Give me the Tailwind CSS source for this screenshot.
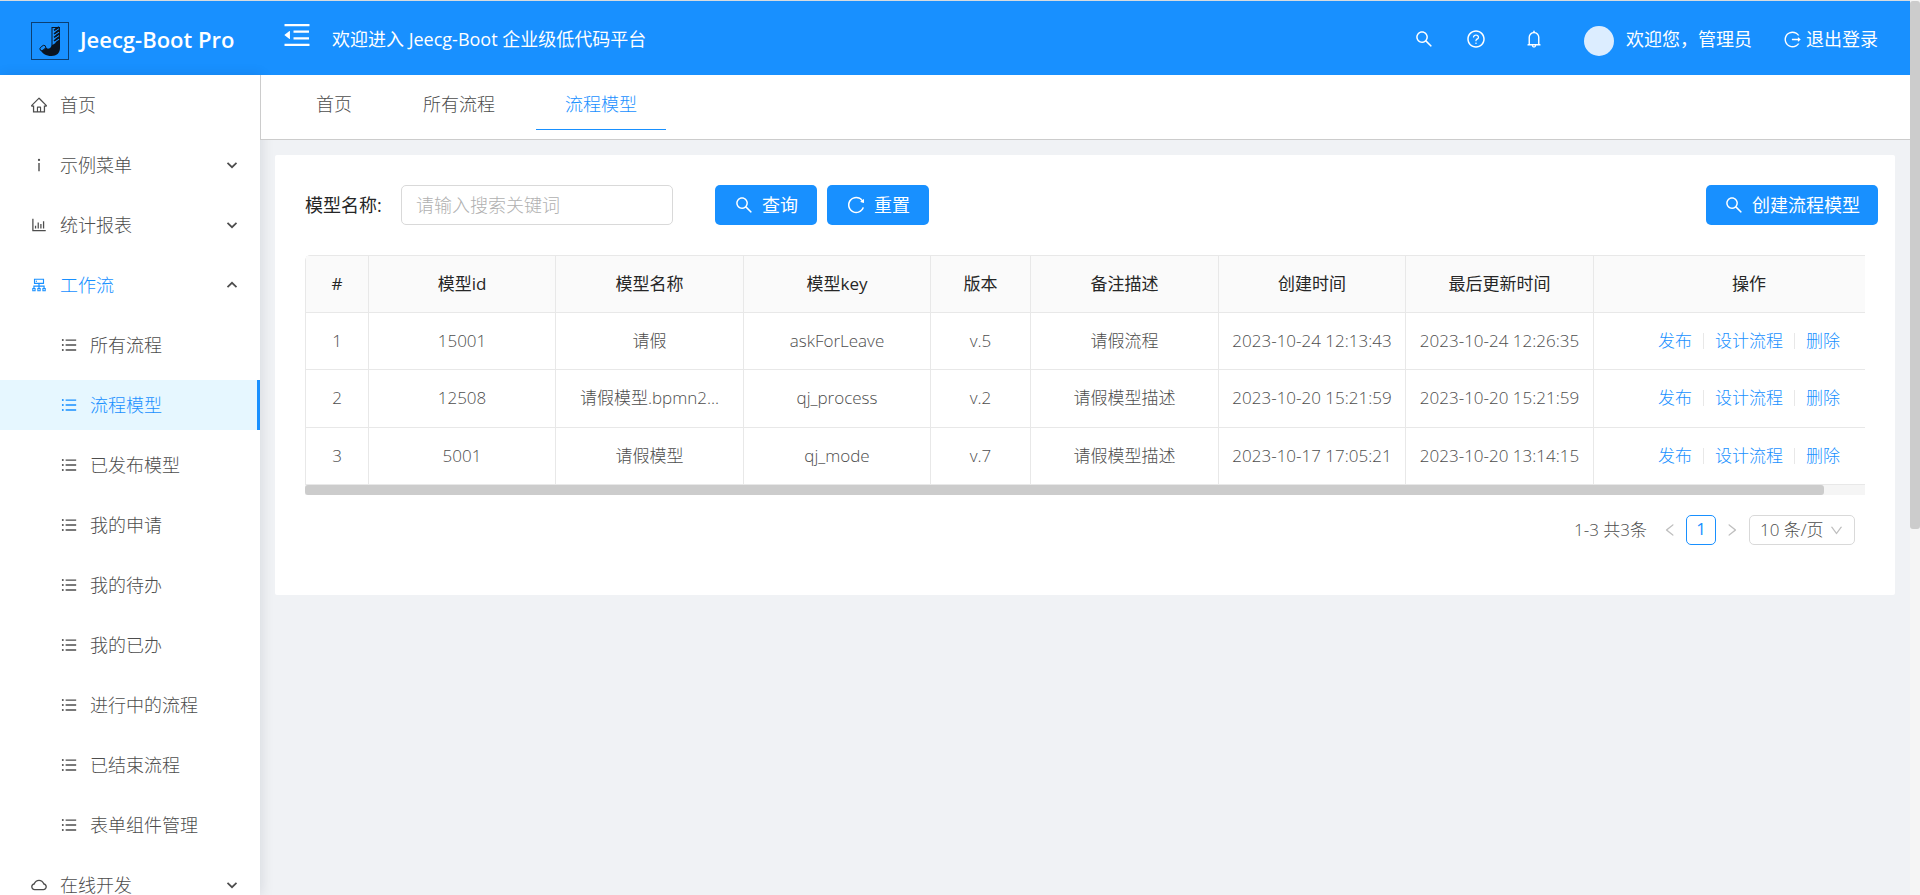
<!DOCTYPE html>
<html lang="zh-CN">
<head>
<meta charset="utf-8">
<title>流程模型 - Jeecg-Boot Pro</title>
<script src="https://cdn.jsdelivr.net/npm/@tailwindcss/browser@4"></script>
</head>
<body class="min-h-screen bg-[#f0f2f5] font-['Open_Sans','Noto_Sans_CJK_SC',sans-serif] text-[17px] leading-[26px] font-light text-[#4d4d4d]">

<svg class="hidden" aria-hidden="true">
  <symbol id="i-search" viewBox="0 0 1024 1024"><path d="M909.6 854.5L649.9 594.8C690.2 542.7 712 479 712 412c0-80.2-31.3-155.4-87.9-212.1-56.6-56.7-132-87.9-212.1-87.9s-155.5 31.3-212.1 87.9C143.2 256.5 112 331.8 112 412c0 80.1 31.3 155.5 87.9 212.1C256.5 680.8 331.8 712 412 712c67 0 130.6-21.8 182.7-62l259.7 259.6a8.2 8.2 0 0 0 11.6 0l43.6-43.5a8.2 8.2 0 0 0 0-11.6zM570.4 570.4C528 612.7 471.8 636 412 636s-116-23.3-158.4-65.6C211.3 528 188 471.8 188 412s23.3-116.1 65.6-158.4C296 211.3 352.2 188 412 188s116.1 23.2 158.4 65.6S636 352.2 636 412s-23.3 116.1-65.6 158.4z"/></symbol>
  <symbol id="i-help" viewBox="0 0 1024 1024"><path d="M512 64C264.6 64 64 264.6 64 512s200.6 448 448 448 448-200.6 448-448S759.4 64 512 64zm0 820c-205.4 0-372-166.6-372-372s166.6-372 372-372 372 166.6 372 372-166.6 372-372 372z"/><path d="M623.6 316.7C593.6 290.4 554 276 512 276s-81.6 14.5-111.6 40.7C369.2 344 352 380.7 352 420v7.6c0 4.4 3.6 8 8 8h48c4.4 0 8-3.6 8-8V420c0-44.1 43.1-80 96-80s96 35.9 96 80c0 31.1-22 59.6-56.1 72.7-21.2 8.1-39.2 22.3-52.1 40.9-13.1 19-19.9 41.8-19.9 64.9V620c0 4.4 3.6 8 8 8h48c4.4 0 8-3.6 8-8v-22.7a48.3 48.3 0 0 1 30.9-44.8c59-22.7 97.1-74.7 97.1-132.5.1-39.3-17.1-76-48.3-103.3zM472 732a40 40 0 1 0 80 0 40 40 0 1 0-80 0z"/></symbol>
  <symbol id="i-bell" viewBox="0 0 1024 1024"><path d="M816 768h-24V428c0-141.1-104.3-257.8-240-277.2V112c0-22.1-17.9-40-40-40s-40 17.9-40 40v38.8C336.3 170.2 232 286.9 232 428v340h-24c-17.7 0-32 14.3-32 32v32c0 4.4 3.6 8 8 8h216c0 61.8 50.2 112 112 112s112-50.2 112-112h216c4.4 0 8-3.6 8-8v-32c0-17.7-14.3-32-32-32zM512 888c-26.5 0-48-21.5-48-48h96c0 26.5-21.5 48-48 48zM304 768V428c0-55.6 21.6-107.8 60.9-147.1S456.4 220 512 220c55.6 0 107.8 21.6 147.1 60.9S720 372.4 720 428v340H304z"/></symbol>
  <symbol id="i-logout" viewBox="0 0 1024 1024"><path d="M868 732h-70.3c-4.8 0-9.3 2.1-12.3 5.8-7 8.5-14.5 16.7-22.4 24.5a353.84 353.84 0 0 1-112.7 75.9A352.8 352.8 0 0 1 512.4 866c-47.9 0-94.3-9.4-137.9-27.8a353.84 353.84 0 0 1-112.7-75.9 353.28 353.28 0 0 1-76-112.5C167.3 606.2 158 559.9 158 512s9.4-94.2 27.8-137.8c17.8-42.1 43.4-80 76-112.5s70.5-58.1 112.7-75.9c43.6-18.4 90-27.8 137.9-27.8 47.9 0 94.3 9.3 137.9 27.8 42.2 17.8 80.1 43.4 112.7 75.9 7.9 7.9 15.3 16.1 22.4 24.5 3 3.7 7.6 5.8 12.3 5.8H868c6.3 0 10.2-7 6.7-12.3C798 160.5 663.8 81.6 511.3 82 271.7 82.6 79.6 277.1 82 516.4 84.4 751.9 276.2 942 512.4 942c152.1 0 285.7-78.8 362.3-197.7 3.4-5.3-.4-12.3-6.7-12.3zm88.9-226.3L815 393.7c-5.3-4.2-13-.4-13 6.3v76H488c-4.4 0-8 3.6-8 8v56c0 4.4 3.6 8 8 8h314v76c0 6.7 7.8 10.5 13 6.3l141.9-112a8 8 0 0 0 0-12.6z"/></symbol>
  <symbol id="i-reload" viewBox="0 0 1024 1024"><path d="M909.1 209.3l-56.4 44.1C775.8 155.1 656.2 92 521.9 92 290 92 102.3 279.5 102 511.5 101.7 743.7 289.8 932 521.9 932c181.3 0 335.8-115 394.6-276.1 1.5-4.2-.7-8.9-4.9-10.3l-56.7-19.5a8 8 0 0 0-10.1 4.8c-1.8 5-3.8 10-5.9 14.9-17.3 41-42.1 77.8-73.7 109.4A344.77 344.77 0 0 1 655.9 829c-42.3 17.9-87.4 27-133.8 27-46.5 0-91.5-9.1-133.8-27A341.5 341.5 0 0 1 279 755.2a342.16 342.16 0 0 1-73.7-109.4c-17.9-42.4-27-87.4-27-133.9s9.1-91.5 27-133.9c17.3-41 42.1-77.8 73.7-109.4 31.6-31.6 68.4-56.4 109.3-73.8 42.3-17.9 87.4-27 133.8-27 46.5 0 91.5 9.1 133.8 27a341.5 341.5 0 0 1 109.3 73.8c9.9 9.9 19.2 20.4 27.8 31.4l-60.2 47a8 8 0 0 0 3 14.1l175.6 43c5 1.2 9.9-2.6 9.9-7.7l.8-180.9c-.1-6.6-7.8-10.3-13-6.2z"/></symbol>
  <symbol id="i-fold" viewBox="0 0 1024 1024"><path d="M408 442h480c4.4 0 8-3.6 8-8v-56c0-4.4-3.6-8-8-8H408c-4.4 0-8 3.6-8 8v56c0 4.4 3.6 8 8 8zm-8 204c0 4.4 3.6 8 8 8h480c4.4 0 8-3.6 8-8v-56c0-4.4-3.6-8-8-8H408c-4.4 0-8 3.6-8 8v56zm504-486H120c-4.4 0-8 3.6-8 8v56c0 4.4 3.6 8 8 8h784c4.4 0 8-3.6 8-8v-56c0-4.4-3.6-8-8-8zm0 632H120c-4.4 0-8 3.6-8 8v56c0 4.4 3.6 8 8 8h784c4.4 0 8-3.6 8-8v-56c0-4.4-3.6-8-8-8zM115.4 518.9L271.7 642c5.8 4.6 14.4.5 14.4-6.9V388.9c0-7.4-8.5-11.5-14.4-6.9L115.4 505.1a8.74 8.74 0 0 0 0 13.8z"/></symbol>
  <symbol id="i-home" viewBox="0 0 1024 1024"><path d="M946.5 505L560.1 118.8l-25.9-25.9a31.5 31.5 0 0 0-44.4 0L77.5 505a63.9 63.9 0 0 0-18.8 46c.4 35.2 29.7 63.3 64.9 63.3h42.5V940h691.8V614.3h43.4c17.1 0 33.2-6.7 45.3-18.8a63.6 63.6 0 0 0 18.7-45.3c0-17-6.7-33.1-18.8-45.2zM568 868H456V664h112v204zm217.9-325.7V868H632V640c0-22.1-17.9-40-40-40H432c-22.1 0-40 17.9-40 40v228H238.1V542.3h-96l370-369.7 23.1 23.1L882 542.3h-96.1z"/></symbol>
  <symbol id="i-info" viewBox="0 0 1024 1024"><path d="M448 224a64 64 0 1 0 128 0 64 64 0 1 0-128 0zm96 168h-64c-4.4 0-8 3.6-8 8v464c0 4.4 3.6 8 8 8h64c4.4 0 8-3.6 8-8V400c0-4.4-3.6-8-8-8z"/></symbol>
  <symbol id="i-chart" viewBox="0 0 1024 1024"><path d="M888 792H200V168c0-4.400-3.600-8-8-8h-56c-4.400 0-8 3.600-8 8v688c0 4.400 3.600 8 8 8h752c4.400 0 8-3.600 8-8v-56c0-4.400-3.600-8-8-8zM280 552h72v160h-72zM432 376h72v336h-72zM584 454h72v258h-72zM736 296h72v416h-72z"/></symbol>
  <symbol id="i-cluster" viewBox="0 0 1024 1024"><path fill-rule="evenodd" d="M888 680h-54V540H546v-92h238c8.800 0 16-7.200 16-16V168c0-8.800-7.200-16-16-16H240c-8.800 0-16 7.200-16 16v264c0 8.800 7.200 16 16 16h238v92H190v140h-54c-4.400 0-8 3.600-8 8v176c0 4.400 3.600 8 8 8h176c4.400 0 8-3.600 8-8V688c0-4.400-3.600-8-8-8h-54v-72h220v72h-54c-4.400 0-8 3.600-8 8v176c0 4.400 3.600 8 8 8h176c4.400 0 8-3.600 8-8V688c0-4.400-3.600-8-8-8h-54v-72h220v72h-54c-4.400 0-8 3.600-8 8v176c0 4.400 3.600 8 8 8h176c4.400 0 8-3.600 8-8V688c0-4.400-3.600-8-8-8zM192 744h64v64h-64zM480 744h64v64h-64zM768 744h64v64h-64zM288 216h448v168H288z"/><circle cx="360" cy="300" r="40"/></symbol>
  <symbol id="i-bars" viewBox="0 0 1024 1024"><path d="M320 192h600v72H320zM320 476h600v72H320zM320 760h600v72H320zM104 228a56 56 0 1 0 112 0 56 56 0 1 0-112 0zm0 284a56 56 0 1 0 112 0 56 56 0 1 0-112 0zm0 284a56 56 0 1 0 112 0 56 56 0 1 0-112 0z"/></symbol>
  <symbol id="i-cloud" viewBox="0 0 1024 1024"><path d="M811.4 418.7C765.6 297.9 648.9 212 512.200 212S258.800 297.800 213 418.600C127.300 441.100 64 519.100 64 612c0 110.500 89.500 200 199.900 200h496.200C870.500 812 960 722.500 960 612c0-92.700-63.100-170.700-148.600-193.300zm36.300 281a123.070 123.070 0 0 1-87.600 36.300H263.900c-33.100 0-64.200-12.900-87.600-36.300A123.300 123.300 0 0 1 140 612c0-28 9.100-54.300 26.200-76.300a125.700 125.700 0 0 1 66.100-43.700l37.900-9.900 13.900-36.600c8.600-22.800 20.600-44.100 35.700-63.400a245.600 245.600 0 0 1 52.400-49.900c41.100-28.900 89.500-44.200 140-44.200s98.900 15.300 140 44.200c19.900 14 37.500 30.800 52.400 49.900 15.100 19.300 27.100 40.700 35.700 63.400l13.800 36.500 37.800 10c54.300 14.500 92.100 63.800 92.100 120 0 33.100-12.900 64.300-36.300 87.700z"/></symbol>
  <symbol id="i-down" viewBox="0 0 1024 1024"><path d="M884 256h-75c-5.100 0-9.900 2.500-12.900 6.600L512 654.200 227.900 262.600c-3-4.100-7.800-6.600-12.900-6.600h-75c-6.500 0-10.300 7.400-6.500 12.700l352.600 486.100c12.800 17.600 39 17.600 51.700 0l352.600-486.100c3.900-5.300.1-12.700-6.400-12.700z"/></symbol>
  <symbol id="i-left" viewBox="0 0 1024 1024"><path d="M724 218.300V141c0-6.700-7.700-10.400-12.900-6.300L260.300 486.800a31.860 31.860 0 0 0 0 50.300l450.800 352.100c5.300 4.100 12.900.4 12.900-6.300v-77.300c0-4.900-2.300-9.600-6.100-12.600l-360-281 360-281.100c3.800-3 6.100-7.700 6.100-12.600z"/></symbol>
  <symbol id="i-caret" viewBox="0 0 12 12"><path d="M1.500 3.800L6 8.200l4.500-4.400" fill="none" stroke="currentColor" stroke-width="1.700"/></symbol>
</svg>

<div class="flex min-h-screen">
  <div class="flex min-w-0 flex-1 flex-col">
    <header class="flex h-[75px] items-center border-t border-[#d6dbdf] bg-[#1890ff] pr-8 text-[18px] text-white">
      <a href="#" class="flex w-[260px] items-center gap-[11px] pt-[6px] pl-[31px]">
        <svg class="size-[38px]" viewBox="0 0 38 38" aria-hidden="true">
          <rect x=".5" y=".5" width="37" height="37" fill="none" stroke="#0b3f73"/>
          <path d="M20.500 5h8.500V26c0 5-3.500 8-8.500 8-5.500 0-9.500-2.500-11.500-7l4.500-3.500c1.500 2.500 3 3.500 4.500 3 1.700-.5 2.500-2 2.500-4z" fill="#0a1420"/>
          <path d="M21.500 6h3v15l-3 2z" fill="#1890ff"/>
          <path d="M23 10l5-3.500M23 13.500l5-3.500M23 17l5-3.500M23 20.500l5-3.500" stroke="#1890ff" stroke-width="1.100"/>
          <path d="M23 8.300l5-3.300M23 11.800l5-3.500M23 15.300l5-3.500M23 18.800l5-3.500" stroke="#0a1420" stroke-width="1.500"/>
          <ellipse cx="11.800" cy="26" rx="3.300" ry="2" transform="rotate(-40 11.800 26)" fill="#1890ff" stroke="#0a1420" stroke-width=".9"/>
        </svg>
        <span class="pb-1 text-[22px] leading-8 font-semibold">Jeecg-Boot Pro</span>
      </a>
      <button type="button" aria-label="收起菜单" class="mb-[6px] ml-[21px]"><svg class="size-8 fill-current"><use href="#i-fold"/></svg></button>
      <span class="ml-[19px] pt-[2px] font-normal">欢迎进入 Jeecg-Boot 企业级低代码平台</span>
      <div class="ml-auto flex items-center pt-[2px] font-normal">
        <button type="button" aria-label="搜索"><svg class="size-5 fill-current"><use href="#i-search"/></svg></button>
        <button type="button" aria-label="帮助" class="ml-8"><svg class="size-5 fill-current"><use href="#i-help"/></svg></button>
        <button type="button" aria-label="通知" class="ml-[38px]"><svg class="size-5 fill-current"><use href="#i-bell"/></svg></button>
        <a href="#" class="ml-10 flex items-center gap-3"><span class="mt-1 size-[30px] rounded-full bg-[#dcedff]"></span>欢迎您，管理员</a>
        <a href="#" class="ml-[31px] flex items-center gap-1"><svg class="size-[19px] fill-current"><use href="#i-logout"/></svg>退出登录</a>
      </div>
    </header>

    <div class="flex flex-1">
      <nav class="z-10 h-[820px] w-[260px] shrink-0 overflow-hidden bg-white pt-[5px] text-[18px] shadow-[2px_0_12px_rgba(0,21,41,0.10)]" aria-label="主菜单">
        <ul class="flex flex-col gap-[10px]">
          <li><a href="#" class="flex h-[50px] items-center gap-3 pl-[30px]"><svg class="size-[18px] fill-current"><use href="#i-home"/></svg>首页</a></li>
          <li><a href="#" class="flex h-[50px] items-center gap-3 pr-[22px] pl-[30px]"><svg class="size-[18px] fill-current"><use href="#i-info"/></svg>示例菜单<svg class="ml-auto size-3"><use href="#i-caret"/></svg></a></li>
          <li><a href="#" class="flex h-[50px] items-center gap-3 pr-[22px] pl-[30px]"><svg class="size-[18px] fill-current"><use href="#i-chart"/></svg>统计报表<svg class="ml-auto size-3"><use href="#i-caret"/></svg></a></li>
          <li>
            <a href="#" class="flex h-[50px] items-center gap-3 pr-[22px] pl-[30px] text-[#1890ff]"><svg class="size-[18px] fill-current"><use href="#i-cluster"/></svg>工作流<svg class="ml-auto size-3 rotate-180 text-[#4d4d4d]"><use href="#i-caret"/></svg></a>
            <ul class="mt-[10px] flex flex-col gap-[10px]">
              <li><a href="#" class="flex h-[50px] items-center gap-3 pl-[60px]"><svg class="size-[18px] fill-current"><use href="#i-bars"/></svg>所有流程</a></li>
              <li><a href="#" aria-current="page" class="flex h-[50px] items-center gap-3 border-r-3 border-[#1890ff] bg-[#e6f7ff] pl-[60px] text-[#1890ff]"><svg class="size-[18px] fill-current"><use href="#i-bars"/></svg>流程模型</a></li>
              <li><a href="#" class="flex h-[50px] items-center gap-3 pl-[60px]"><svg class="size-[18px] fill-current"><use href="#i-bars"/></svg>已发布模型</a></li>
              <li><a href="#" class="flex h-[50px] items-center gap-3 pl-[60px]"><svg class="size-[18px] fill-current"><use href="#i-bars"/></svg>我的申请</a></li>
              <li><a href="#" class="flex h-[50px] items-center gap-3 pl-[60px]"><svg class="size-[18px] fill-current"><use href="#i-bars"/></svg>我的待办</a></li>
              <li><a href="#" class="flex h-[50px] items-center gap-3 pl-[60px]"><svg class="size-[18px] fill-current"><use href="#i-bars"/></svg>我的已办</a></li>
              <li><a href="#" class="flex h-[50px] items-center gap-3 pl-[60px]"><svg class="size-[18px] fill-current"><use href="#i-bars"/></svg>进行中的流程</a></li>
              <li><a href="#" class="flex h-[50px] items-center gap-3 pl-[60px]"><svg class="size-[18px] fill-current"><use href="#i-bars"/></svg>已结束流程</a></li>
              <li><a href="#" class="flex h-[50px] items-center gap-3 pl-[60px]"><svg class="size-[18px] fill-current"><use href="#i-bars"/></svg>表单组件管理</a></li>
            </ul>
          </li>
          <li><a href="#" class="flex h-[50px] items-center gap-3 pr-[22px] pl-[30px]"><svg class="size-[18px] fill-current"><use href="#i-cloud"/></svg>在线开发<svg class="ml-auto size-3"><use href="#i-caret"/></svg></a></li>
        </ul>
      </nav>

      <main class="min-w-0 flex-1">
        <div class="relative z-20 flex h-[65px] gap-3 border-b border-l border-[#ccc] bg-white pl-[25px] text-[18px]">
          <a href="#" class="flex h-[55px] w-24 items-center justify-center border-b border-transparent pt-1">首页</a>
          <a href="#" class="flex h-[55px] w-[130px] items-center justify-center border-b border-transparent pt-1">所有流程</a>
          <a href="#" aria-current="page" class="flex h-[55px] w-[130px] items-center justify-center border-b border-[#1890ff] pt-1 text-[#1890ff]">流程模型</a>
        </div>

        <section class="m-[15px] rounded-xs bg-white px-[30px] pt-[30px] pb-[50px]">
          <form class="mr-[-13px] flex items-center text-[18px]">
            <label for="q" class="w-24 font-normal text-[#262626]">模型名称:</label>
            <input id="q" type="text" placeholder="请输入搜索关键词" class="h-10 w-[272px] rounded-[5px] border border-[#d9d9d9] px-[14px] font-light outline-none placeholder:text-[#b0b0b0]">
            <button type="button" class="ml-[42px] flex h-10 w-[102px] items-center justify-center gap-2 rounded-[5px] bg-[#1890ff] font-normal text-white"><svg class="size-5 fill-current"><use href="#i-search"/></svg>查询</button>
            <button type="reset" class="ml-[10px] flex h-10 w-[102px] items-center justify-center gap-2 rounded-[5px] bg-[#1890ff] font-normal text-white"><svg class="size-5 fill-current"><use href="#i-reload"/></svg>重置</button>
            <button type="button" class="ml-auto flex h-10 w-[172px] items-center justify-center gap-2 rounded-[5px] bg-[#1890ff] font-normal text-white"><svg class="size-5 fill-current"><use href="#i-search"/></svg>创建流程模型</button>
          </form>

          <div class="mt-[30px] overflow-hidden rounded-tl-[5px]">
            <table class="h-[230px] w-full min-w-[1600px] table-fixed border-separate border-spacing-0 rounded-tl-[5px] border-t border-l border-[#e8e8e8] text-center [&_td]:border-r [&_td]:border-b [&_td]:border-[#e8e8e8] [&_td]:px-5 [&_th]:border-r [&_th]:border-b [&_th]:border-[#e8e8e8]">
              <colgroup><col class="w-[63px]"><col class="w-[187px]"><col class="w-[188px]"><col class="w-[187px]"><col class="w-[100px]"><col class="w-[188px]"><col class="w-[187px]"><col class="w-[188px]"><col></colgroup>
              <thead class="bg-[#fafafa] text-[#262626]">
                <tr class="h-[57px]"><th class="font-normal">#</th><th class="font-normal">模型id</th><th class="font-normal">模型名称</th><th class="font-normal">模型key</th><th class="font-normal">版本</th><th class="font-normal">备注描述</th><th class="font-normal">创建时间</th><th class="font-normal">最后更新时间</th><th class="font-normal">操作</th></tr>
              </thead>
              <tbody class="whitespace-nowrap">
                <tr><td>1</td><td>15001</td><td>请假</td><td>askForLeave</td><td>v.5</td><td>请假流程</td><td><span class="-mx-3">2023-10-24 12:13:43</span></td><td><span class="-mx-3">2023-10-24 12:26:35</span></td>
                  <td><div class="flex items-center justify-center gap-[11px] text-[#1890ff]"><a href="#">发布</a><i class="h-4 w-px bg-[#e8e8e8]"></i><a href="#">设计流程</a><i class="h-4 w-px bg-[#e8e8e8]"></i><a href="#">删除</a></div></td></tr>
                <tr><td>2</td><td>12508</td><td>请假模型.bpmn2...</td><td>qj_process</td><td>v.2</td><td>请假模型描述</td><td><span class="-mx-3">2023-10-20 15:21:59</span></td><td><span class="-mx-3">2023-10-20 15:21:59</span></td>
                  <td><div class="flex items-center justify-center gap-[11px] text-[#1890ff]"><a href="#">发布</a><i class="h-4 w-px bg-[#e8e8e8]"></i><a href="#">设计流程</a><i class="h-4 w-px bg-[#e8e8e8]"></i><a href="#">删除</a></div></td></tr>
                <tr><td>3</td><td>5001</td><td>请假模型</td><td>qj_mode</td><td>v.7</td><td>请假模型描述</td><td><span class="-mx-3">2023-10-17 17:05:21</span></td><td><span class="-mx-3">2023-10-20 13:14:15</span></td>
                  <td><div class="flex items-center justify-center gap-[11px] text-[#1890ff]"><a href="#">发布</a><i class="h-4 w-px bg-[#e8e8e8]"></i><a href="#">设计流程</a><i class="h-4 w-px bg-[#e8e8e8]"></i><a href="#">删除</a></div></td></tr>
              </tbody>
            </table>
          </div>
          <div class="h-[10px] bg-[#f5f5f5]"><div class="h-full rounded-[3px] bg-[#ccc]" style="width:97.4%"></div></div>

          <div class="mt-5 mr-[10px] flex items-center justify-end">
            <span>1-3 共3条</span>
            <button type="button" aria-label="上一页" class="ml-[15px] text-[#bfbfbf]"><svg class="size-4 fill-current"><use href="#i-left"/></svg></button>
            <button type="button" aria-current="page" class="ml-2 size-[30px] rounded-[5px] border border-[#1890ff] pb-1 font-normal text-[#1890ff]">1</button>
            <button type="button" aria-label="下一页" class="ml-2 rotate-180 text-[#bfbfbf]"><svg class="size-4 fill-current"><use href="#i-left"/></svg></button>
            <div class="relative ml-[9px] w-[106px]">
              <select aria-label="每页条数" class="h-[30px] w-full appearance-none rounded-[5px] border border-[#d9d9d9] bg-white pl-[10px]"><option>10 条/页</option></select>
              <svg class="pointer-events-none absolute top-2 right-[11px] size-[15px] fill-[#bfbfbf]"><use href="#i-down"/></svg>
            </div>
          </div>
        </section>
      </main>
    </div>
  </div>

  <div class="w-[10px] shrink-0 bg-[#f5f5f5] pt-px" aria-hidden="true"><div class="h-[528px] rounded-[3px] bg-[#ccc]"></div></div>
</div>
</body>
</html>
